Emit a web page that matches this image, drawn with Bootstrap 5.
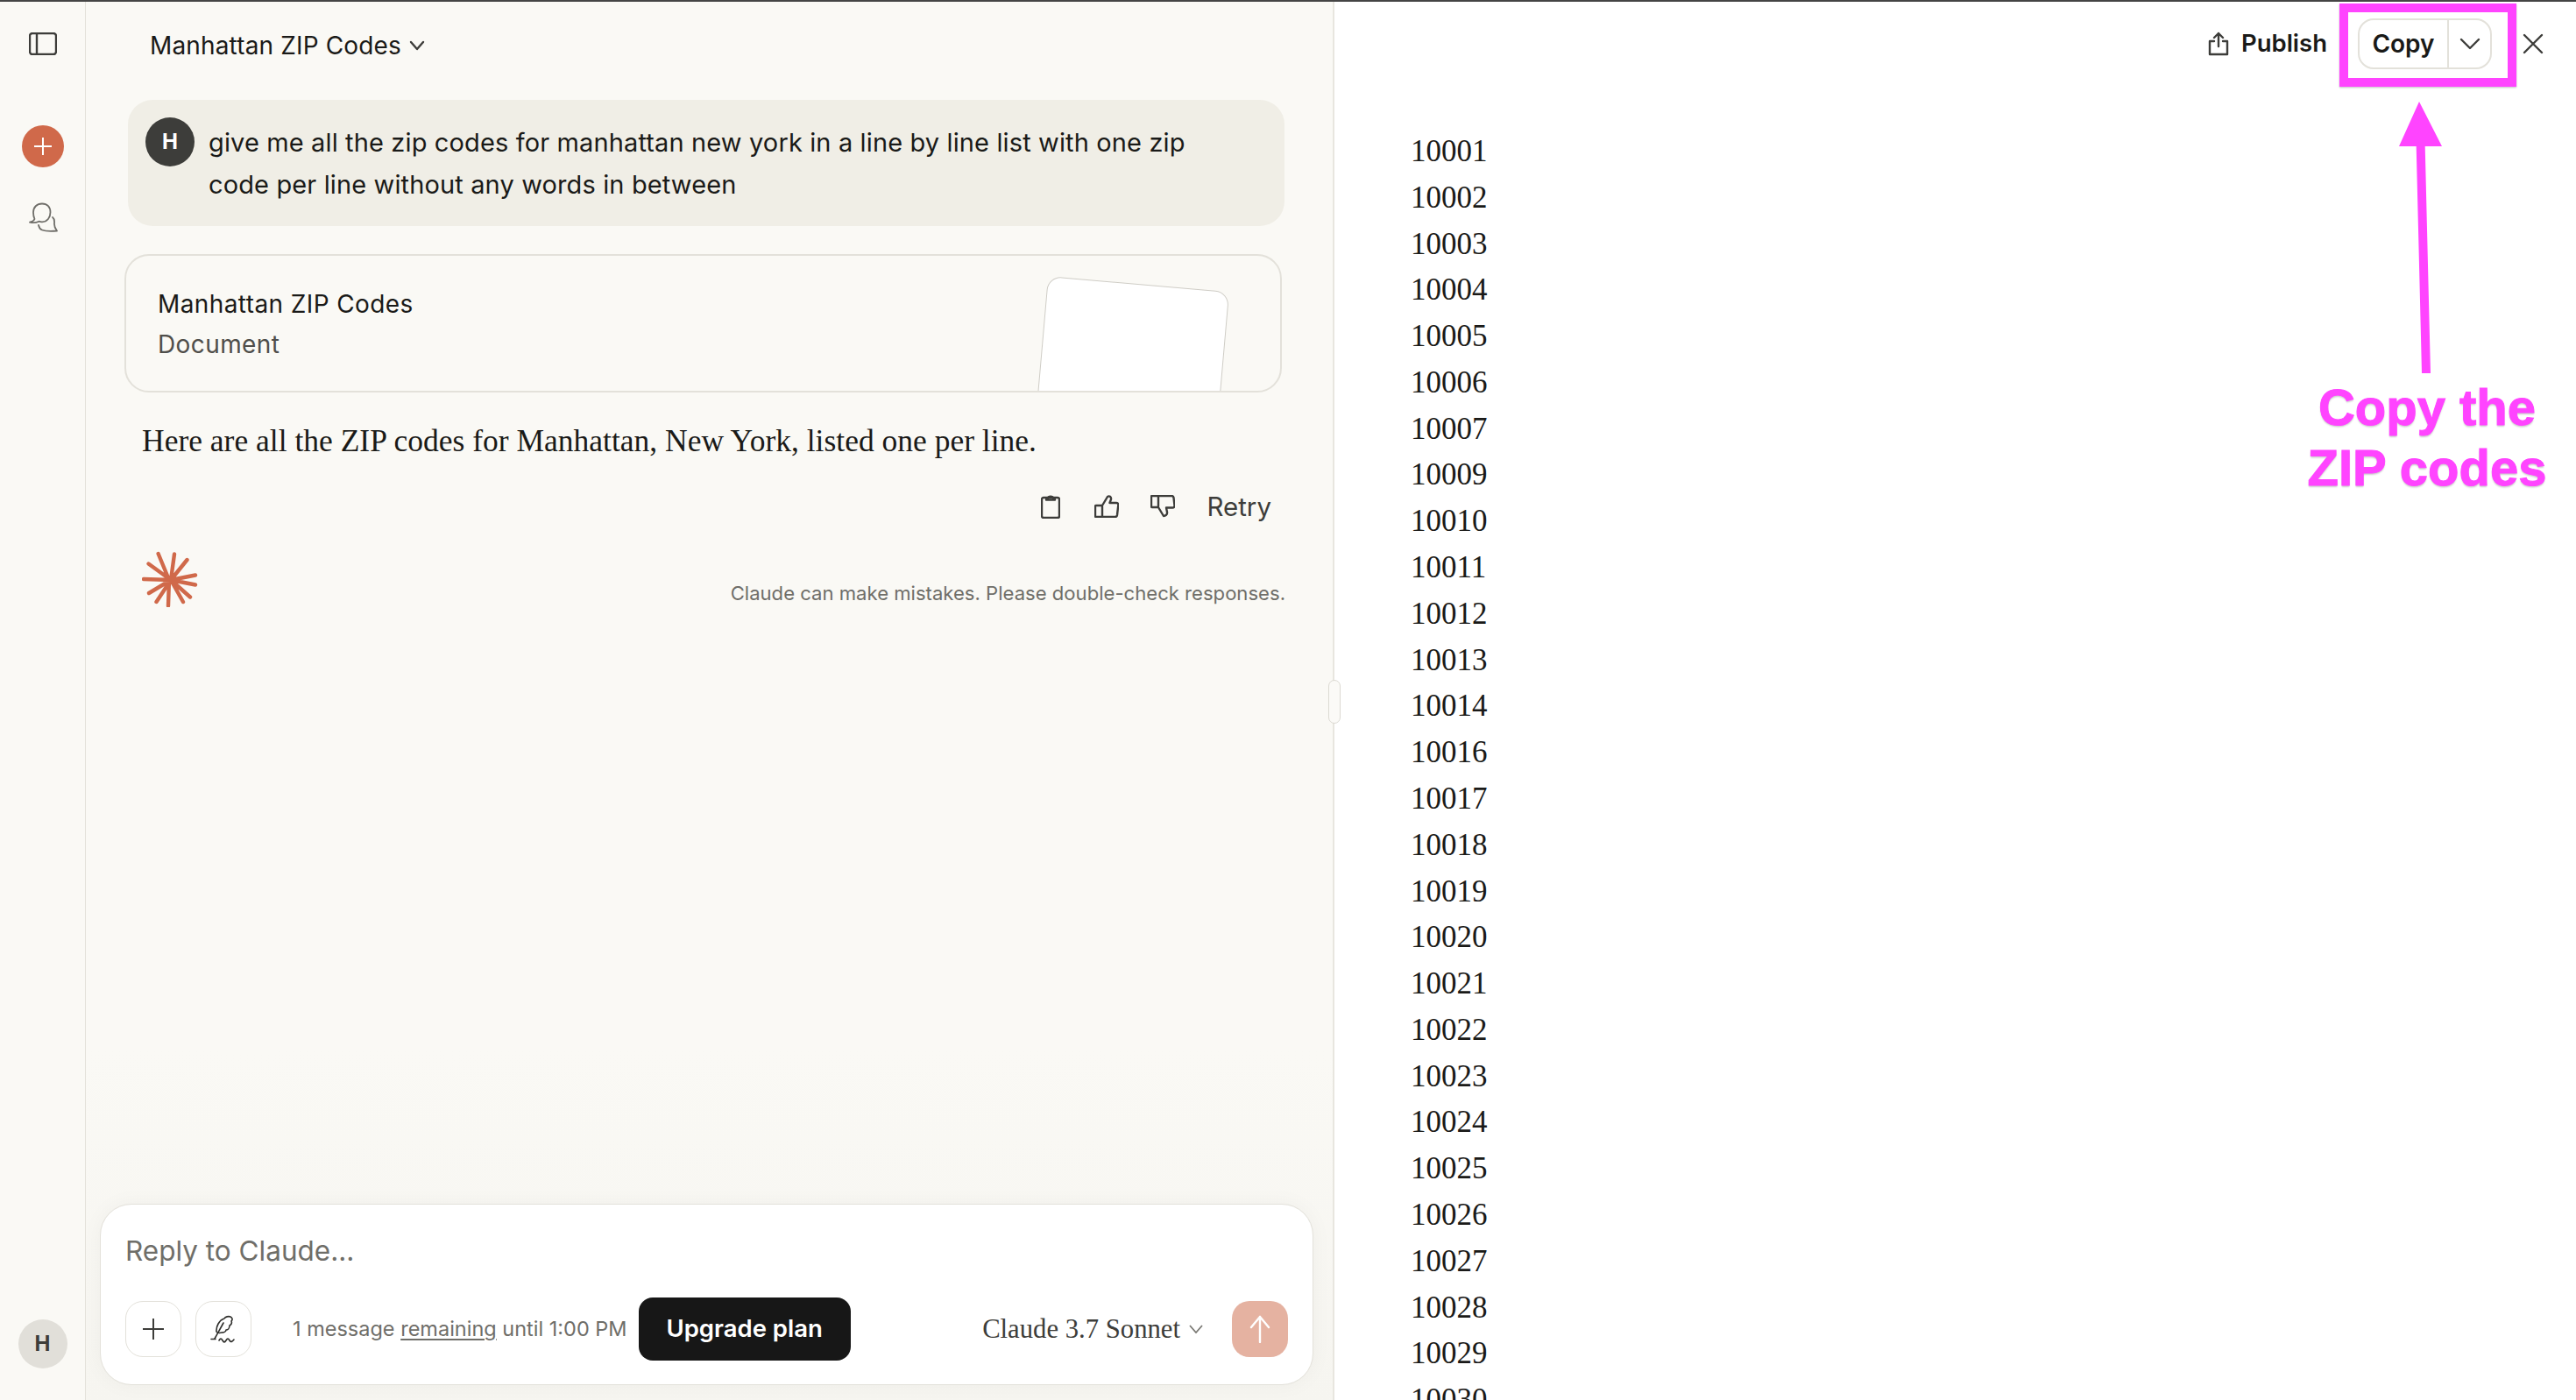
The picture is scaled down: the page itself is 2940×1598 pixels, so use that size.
<!DOCTYPE html>
<html lang="en">
<head>
<meta charset="utf-8">
<title>Manhattan ZIP Codes</title>
<link href="https://cdn.jsdelivr.net/npm/bootstrap@5.3.0/dist/css/bootstrap.min.css" rel="stylesheet">
<style>
html,body{height:100%;}
body{overflow:hidden;background:#fff;color:#1a1a18;font-family:"Inter","Liberation Sans",sans-serif;font-size:28px;}
svg{display:block;flex:none;}
.stroke-ico{fill:none;stroke:#3d3d3a;stroke-width:2.4;stroke-linecap:round;stroke-linejoin:round;}
.shell{height:100vh;border-top:2px solid #454545;position:relative;}
.rail{width:98px;flex:none;background:#faf9f5;border-right:1px solid #e3e1da;padding:35px 0 36px;}
.rail-new{width:48px;height:48px;border-radius:50%;background:#d0694a;margin-top:80px;}
.rail-search{margin-top:40px;}
.rail-search path{stroke:#6f6e69;stroke-width:1.800;}
.rail-user{width:56px;height:56px;border-radius:50%;background:#e1dfd9;color:#3d3d3a;font-weight:700;font-size:24px;}
.chat{width:1425px;flex:none;background:linear-gradient(#faf9f5 75%,#f6f5f0);border-right:2px solid #e8e6df;}
.chat-head{height:100px;margin-bottom:12px;padding-left:73px;gap:9px;font-size:28px;letter-spacing:.15px;}
.bubble{margin:0 55px 0 48px;height:144px;background:#f0eee6;border-radius:28px;padding:20px;gap:16px;}
.bubble-av{width:56px;height:56px;border-radius:50%;background:#3d3d3a;color:#fff;font-weight:700;font-size:24px;flex:none;}
.bubble-txt{font-size:29px;letter-spacing:.13px;line-height:48px;margin:5px 0 0;}
.doc{margin:32px 58px 0 44px;height:158px;border:2px solid #e3e1da;border-radius:28px;padding:32px 36px;overflow:hidden;position:relative;}
.doc-line{line-height:46px;font-size:28px;letter-spacing:.4px;}
.doc-sub{color:#4f4e4a;}
.paper{position:absolute;left:1052px;top:23px;width:208px;height:300px;background:#fff;border:1px solid #cfcdc6;border-radius:16px;transform-origin:0 0;transform:rotate(5deg);}
.answer{font-family:"Liberation Serif",serif;font-size:35.500px;line-height:48px;margin:31px 0 0 64px;}
.acts{margin:37px 70px 0 0;gap:36px;height:28px;color:#3d3d3a;}
.retry{font-size:29.500px;}
.clip-gap{margin-right:3px;}
.foot-row{margin:37px 54px 0 64px;height:64px;}
.disc{font-size:22.100px;line-height:32px;margin-top:32px;color:#6f6e69;}
.dock{margin:auto 22px 17px 16px;height:207px;background:#fff;border:1px solid #e3e1da;border-radius:36px;padding:29px 28px 0;box-shadow:0 0 24px rgba(60,50,30,.04);}
.dock-hint{line-height:48px;font-size:31.500px;color:#6f6e69;}
.dock-row{margin-top:29px;height:72px;}
.sq-btn{width:64px;height:64px;padding:0;border:1px solid #e3e1da;border-radius:20px;background:#fff;}
.sq-second{margin-left:16px;}
.limit{font-size:23.500px;color:#6f6e69;margin-left:47px;margin-right:13px;}
.limit u{text-underline-offset:3px;}
.upgrade{height:72px;width:242px;padding:0;background:#171717;color:#fff;font-weight:600;font-size:27.500px;border:0;border-radius:16px;}
.upgrade:hover{background:#171717;color:#fff;}
.model{font-family:"Liberation Serif",serif;font-size:30.700px;color:#3d3d3a;gap:10px;margin-right:33px;}
.send{background:#e5b2a1;border:0;}
.panel{flex:1 1 0;min-width:0;background:#fff;overflow:hidden;}
.panel-top{height:96px;padding-top:19px;padding-right:37px;}
.pub{gap:14px;font-weight:600;font-size:27.500px;margin-right:35px;color:#1a1a18;height:58px;}
.copy-grp{height:58px;width:153px;border:2px solid #e3e1da;border-radius:18px;margin-right:35px;}
.copy-main{width:102px;font-weight:600;font-size:28px;border-right:2px solid #e3e1da;}
.copy-more{flex:1;}
.close-slot{height:58px;}
.zips{list-style:none;margin:49px 0 0;padding:0 0 0 87px;font-family:"Liberation Serif",serif;font-size:35px;line-height:52.78px;color:#1a1a18;}
.grip{position:absolute;left:1516px;top:774px;width:14px;height:50px;background:#fbfaf7;border:1px solid #dcdad3;border-radius:7px;}
.note-box{position:absolute;left:2670px;top:2px;width:202px;height:95px;border:10px solid #ff44ff;box-shadow:0 1px 2px rgba(0,0,0,.25);}
.note-arrow{position:absolute;left:2730px;top:110px;}
.note-text{position:absolute;left:2620px;top:428px;width:300px;text-align:center;font-family:"Liberation Sans",sans-serif;font-weight:700;font-size:58px;line-height:69px;color:#ff44ff;-webkit-text-stroke:1px #ff44ff;text-shadow:0 2px 2px rgba(0,0,0,.2);}
</style>
</head>
<body>
<div class="shell d-flex">
  <aside class="rail d-flex flex-column align-items-center">
    <svg width="32" height="26" viewBox="0 0 32 26" class="stroke-ico"><rect x="1" y="1" width="30" height="24" rx="3"/><path d="M9 1v24"/></svg>
    <div class="rail-new d-flex align-items-center justify-content-center">
      <svg width="22" height="22" viewBox="0 0 22 22" fill="none" stroke="#fff" stroke-width="2"><path d="M11 1v20M1 11h20"/></svg>
    </div>
    <svg class="rail-search stroke-ico" width="34" height="34" viewBox="0 0 34 34"><path d="M16 1.500c-6 0-10 4-10 10 0 3 .6 5.500 1.500 7.500-.8 1.800-2.600 3-5.500 3.700 3.500.8 7.500.5 10.500-1 1.200.4 2.300.6 3.500.6 6 0 9.500-5 9.500-11S22 1.500 16 1.500z"/><path d="M28 17c2 1.500 2.300 4 2 7-.2 3 1 6 3 8.500-6 .5-13 .5-17-1-2.500-1-3.500-3-4-5.500"/></svg>
    <div class="rail-user mt-auto d-flex align-items-center justify-content-center">H</div>
  </aside>

  <main class="chat d-flex flex-column">
    <header class="chat-head d-flex align-items-center">
      <span>Manhattan ZIP Codes</span>
      <svg width="18" height="12" viewBox="0 0 18 12" class="stroke-ico"><path d="M2 2l7 8 7-8"/></svg>
    </header>

    <div class="bubble d-flex">
      <div class="bubble-av d-flex align-items-center justify-content-center">H</div>
      <p class="bubble-txt">give me all the zip codes for manhattan new york in a line by line list with one zip<br>code per line without any words in between</p>
    </div>

    <div class="doc">
      <div class="doc-line">Manhattan ZIP Codes</div>
      <div class="doc-line doc-sub">Document</div>
      <div class="paper"></div>
    </div>

    <p class="answer">Here are all the ZIP codes for Manhattan, New York, listed one per line.</p>

    <div class="acts d-flex align-items-center justify-content-end">
      <svg class="stroke-ico clip-gap" width="22" height="28" viewBox="0 0 22 28"><rect x="1" y="4" width="20" height="23" rx="2"/><path d="M6 6.500c0-1.500 1-2 2-2 .5-2.500 5.500-2.500 6 0 1 0 2 .5 2 2z"/></svg>
      <svg class="stroke-ico" width="28" height="26" viewBox="0 0 28 26"><rect x="1" y="12" width="8" height="13" rx="1"/><path d="M9 12l6-10c2-1.500 4.500 0 4 3l-1.500 4H25c1.500 0 2.500 1 2.300 2.500L26 23c-.2 1.300-1 2-2.300 2H9"/></svg>
      <svg class="stroke-ico" width="28" height="26" viewBox="0 0 28 26"><rect x="1" y="1" width="8" height="13" rx="1"/><path d="M9 1h15c1.300 0 2.300.8 2.500 2L27.500 12c.2 1.500-.8 2.500-2.300 2.500H18l1 5c.5 3-2 4.500-4 4.500L9 14"/></svg>
      <span class="retry">Retry</span>
    </div>

    <div class="foot-row d-flex justify-content-between">
      <svg width="64" height="64" viewBox="0 0 64 64" stroke="#d0694a" stroke-width="4.400" stroke-linecap="round">
        <path d="M31 33L18.600 3M33 33L37 3.500M33 33L51.500 10M33 33L61 27.500M33 33L61 38.500M33 33L55 52.500M33 33L47 58M31 33L30 62.500M33 33L16.500 58M33 33L8 48M33 33L2 32M33 33L7.500 14.500"/>
      </svg>
      <span class="disc">Claude can make mistakes. Please double-check responses.</span>
    </div>

    <div class="dock">
      <div class="dock-hint">Reply to Claude...</div>
      <div class="dock-row d-flex align-items-center">
        <button class="btn sq-btn d-flex align-items-center justify-content-center" type="button" aria-label="Add">
          <svg width="26" height="26" viewBox="0 0 26 26" fill="none" stroke="#3d3d3a" stroke-width="2"><path d="M13 1v24M1 13h24"/></svg>
        </button>
        <button class="btn sq-btn sq-second d-flex align-items-center justify-content-center" type="button" aria-label="Style">
          <svg width="32" height="32" viewBox="0 0 32 32" fill="none" stroke="#2f2f2c" stroke-width="1.600" stroke-linecap="round" stroke-linejoin="round"><path d="M8 19c-.5-6 3-13 9-15 1-2 5-3 7-2 2 1 3 3 1 5 1 2 0 4-2 5 0 3-2 5-4 5 0 2-3 3-5 3-3 1-5 0-6-1z"/><path d="M6 27l10-18"/><path d="M2 27.500h5M11 29c1.500-2.500 2.500-2.500 4 0s2.500 2.500 4 0 2.500-2.500 4 0 3 1.500 5-1"/></svg>
        </button>
        <span class="limit">1 message <u>remaining</u> until 1:00 PM</span>
        <button class="btn upgrade" type="button">Upgrade plan</button>
        <div class="model ms-auto d-flex align-items-center">
          <span>Claude 3.7 Sonnet</span>
          <svg width="16" height="10" viewBox="0 0 16 10" fill="none" stroke="#7b7a75" stroke-width="1.800"><path d="M1 1l7 8 7-8"/></svg>
        </div>
        <button class="btn sq-btn send d-flex align-items-center justify-content-center" type="button" aria-label="Send">
          <svg width="24" height="32" viewBox="0 0 24 32" fill="none" stroke="#fff" stroke-width="2.400" stroke-linecap="round" stroke-linejoin="round"><path d="M12 31V2M2 14L12 2l10 12"/></svg>
        </button>
      </div>
    </div>
  </main>

  <section class="panel">
    <div class="panel-top d-flex justify-content-end align-items-start">
      <div class="pub d-flex align-items-center">
        <svg class="stroke-ico" width="24" height="28" viewBox="0 0 24 28"><path d="M7 11H2v15h20V11h-5M12 17V2M7 7l5-5 5 5"/></svg>
        <span>Publish</span>
      </div>
      <div class="copy-grp d-flex">
        <span class="copy-main d-flex align-items-center justify-content-center">Copy</span>
        <span class="copy-more d-flex align-items-center justify-content-center">
          <svg width="24" height="14" viewBox="0 0 24 14" class="stroke-ico"><path d="M2 2l10 10L22 2"/></svg>
        </span>
      </div>
      <div class="close-slot d-flex align-items-center">
        <svg width="24" height="24" viewBox="0 0 24 24" class="stroke-ico"><path d="M2 2l20 20M22 2L2 22"/></svg>
      </div>
    </div>
    <ul class="zips">
      <li>10001</li><li>10002</li><li>10003</li><li>10004</li><li>10005</li><li>10006</li><li>10007</li>
      <li>10009</li><li>10010</li><li>10011</li><li>10012</li><li>10013</li><li>10014</li><li>10016</li>
      <li>10017</li><li>10018</li><li>10019</li><li>10020</li><li>10021</li><li>10022</li><li>10023</li>
      <li>10024</li><li>10025</li><li>10026</li><li>10027</li><li>10028</li><li>10029</li><li>10030</li>
    </ul>
  </section>

  <div class="grip"></div>
  <div class="note-box"></div>
  <svg class="note-arrow" width="64" height="320" viewBox="0 0 64 320" fill="#ff44ff"><path d="M31 4L57 55H37.700L44 314H34L27.700 55H8z"/></svg>
  <div class="note-text">Copy the<br>ZIP codes</div>
</div>
<script src="https://cdn.jsdelivr.net/npm/bootstrap@5.3.0/dist/js/bootstrap.bundle.min.js"></script>
</body>
</html>
